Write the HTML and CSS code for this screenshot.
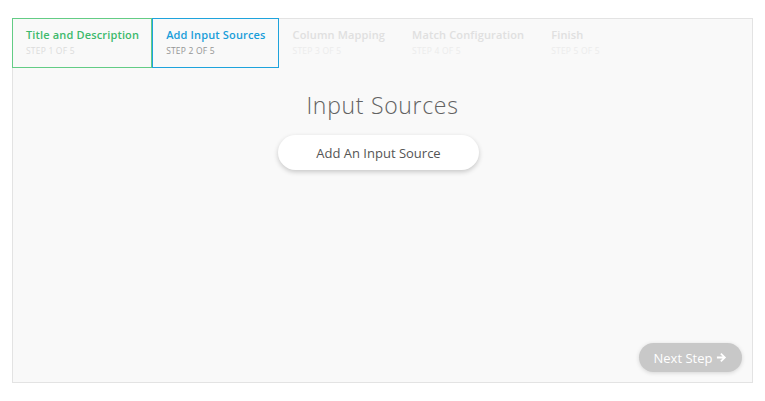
FILE: index.html
```html
<!DOCTYPE html>
<html lang="en">
<head>
<meta charset="utf-8">
<title>Input Sources</title>
<link rel="stylesheet" href="styles.css">
</head>
<body>
<div class="wizard">
  <div class="steps">
    <div class="step done">
      <div class="step-title">Title and Description</div>
      <div class="step-sub">Step 1 of 5</div>
    </div>
    <div class="step active">
      <div class="step-title">Add Input Sources</div>
      <div class="step-sub">Step 2 of 5</div>
    </div>
    <div class="step">
      <div class="step-title">Column Mapping</div>
      <div class="step-sub">Step 3 of 5</div>
    </div>
    <div class="step">
      <div class="step-title">Match Configuration</div>
      <div class="step-sub">Step 4 of 5</div>
    </div>
    <div class="step">
      <div class="step-title">Finish</div>
      <div class="step-sub">Step 5 of 5</div>
    </div>
  </div>
  <div class="content">
    <h1 class="heading">Input Sources</h1>
    <button class="add-btn">Add An Input Source</button>
  </div>
  <div class="footer">
    <button class="next-btn">Next Step
      <svg class="arrow" viewBox="0 0 12 12" width="11" height="11"><path d="M1 5h6.2L4.6 2.4 6 1l5 5-5 5-1.4-1.4L7.2 7H1z" fill="#fff"/></svg>
    </button>
  </div>
</div>
</body>
</html>
```
FILE: styles.css
```css
html, body {
  margin: 0;
  padding: 0;
  background: #ffffff;
}
body {
  padding: 18px 12px 0 12px;
  font-family: "Open Sans", "Liberation Sans", sans-serif;
}
.wizard {
  box-sizing: border-box;
  width: 741px;
  height: 365px;
  border: 1px solid #e3e3e3;
  background: #f9f9f9;
  display: flex;
  flex-direction: column;
}
.steps {
  display: flex;
  margin: -1px 0 0 -1px;
}
.step {
  box-sizing: border-box;
  height: 50px;
  padding: 9px 12px 0 13px;
  border: 1px solid transparent;
}
.step.done {
  border-color: #63cc85;
}
.step.active {
  border-color: #1ea3dc;
}
.step-title {
  font-size: 11px;
  font-weight: 600;
  letter-spacing: 0.15px;
  color: #e0e0e0;
  line-height: 14px;
  white-space: nowrap;
}
.step-sub {
  margin-top: 3px;
  font-size: 8.5px;
  letter-spacing: 0.2px;
  text-transform: uppercase;
  color: #ececec;
  line-height: 11px;
}
.step.done .step-title { color: #3dba6c; }
.step.done .step-sub { color: #dcdcdc; }
.step.active .step-title { color: #1a9ed9; }
.step.active .step-sub { color: #959595; }
.content {
  flex: 1;
  display: flex;
  flex-direction: column;
  align-items: center;
}
.heading {
  margin: 23px 0 0 0;
  font-size: 23px;
  font-weight: 300;
  letter-spacing: 0.7px;
  color: #626262;
  line-height: 28px;
}
.add-btn {
  margin: 16px 8px 0 0;
  width: 201px;
  height: 35px;
  border: none;
  border-radius: 18px;
  background: #ffffff;
  box-shadow: 0 2px 5px rgba(0,0,0,0.2);
  font-family: inherit;
  font-size: 13px;
  color: #555555;
}
.footer {
  display: flex;
  justify-content: flex-end;
  padding: 0 10px 10px 0;
}
.next-btn {
  display: flex;
  align-items: center;
  justify-content: center;
  gap: 4px;
  width: 103px;
  height: 29px;
  border: none;
  border-radius: 15px;
  background: #c8c8c8;
  box-shadow: 0 1px 4px rgba(0,0,0,0.15);
  font-family: inherit;
  font-size: 13px;
  color: #ffffff;
}
```
